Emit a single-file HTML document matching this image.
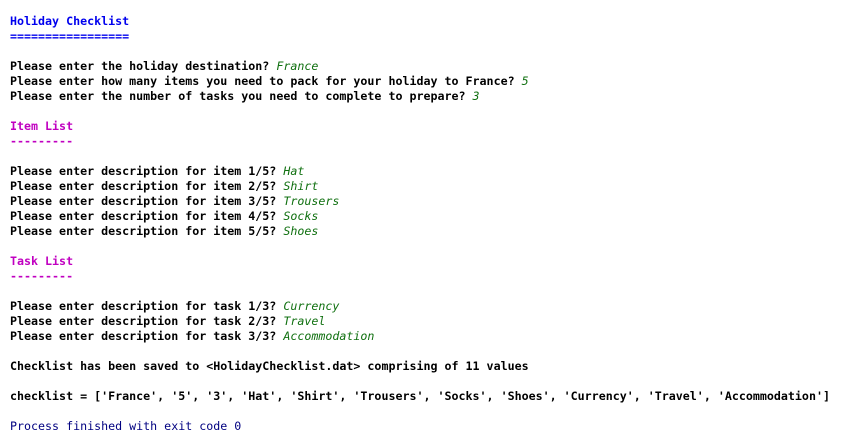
<!DOCTYPE html>
<html><head><meta charset="utf-8"><style>
html,body{margin:0;padding:0;background:#fff;width:850px;height:445px;overflow:hidden}
pre{margin:0;padding:14px 0 0 10px;font-family:"DejaVu Sans Mono","Liberation Mono",monospace;font-size:11.65px;line-height:15px;font-weight:bold;color:#000}
.b{color:#0000ee}.m{color:#c000c0}
i{color:#107010;font-weight:normal}
.n{color:#000080;font-weight:normal}
</style></head><body><pre><span class="b">Holiday Checklist
=================</span>

Please enter the holiday destination? <i>France</i>
Please enter how many items you need to pack for your holiday to France? <i>5</i>
Please enter the number of tasks you need to complete to prepare? <i>3</i>

<span class="m">Item List
---------</span>

Please enter description for item 1/5? <i>Hat</i>
Please enter description for item 2/5? <i>Shirt</i>
Please enter description for item 3/5? <i>Trousers</i>
Please enter description for item 4/5? <i>Socks</i>
Please enter description for item 5/5? <i>Shoes</i>

<span class="m">Task List
---------</span>

Please enter description for task 1/3? <i>Currency</i>
Please enter description for task 2/3? <i>Travel</i>
Please enter description for task 3/3? <i>Accommodation</i>

Checklist has been saved to &lt;HolidayChecklist.dat&gt; comprising of 11 values

checklist = ['France', '5', '3', 'Hat', 'Shirt', 'Trousers', 'Socks', 'Shoes', 'Currency', 'Travel', 'Accommodation']

<span class="n">Process finished with exit code 0</span></pre></body></html>
